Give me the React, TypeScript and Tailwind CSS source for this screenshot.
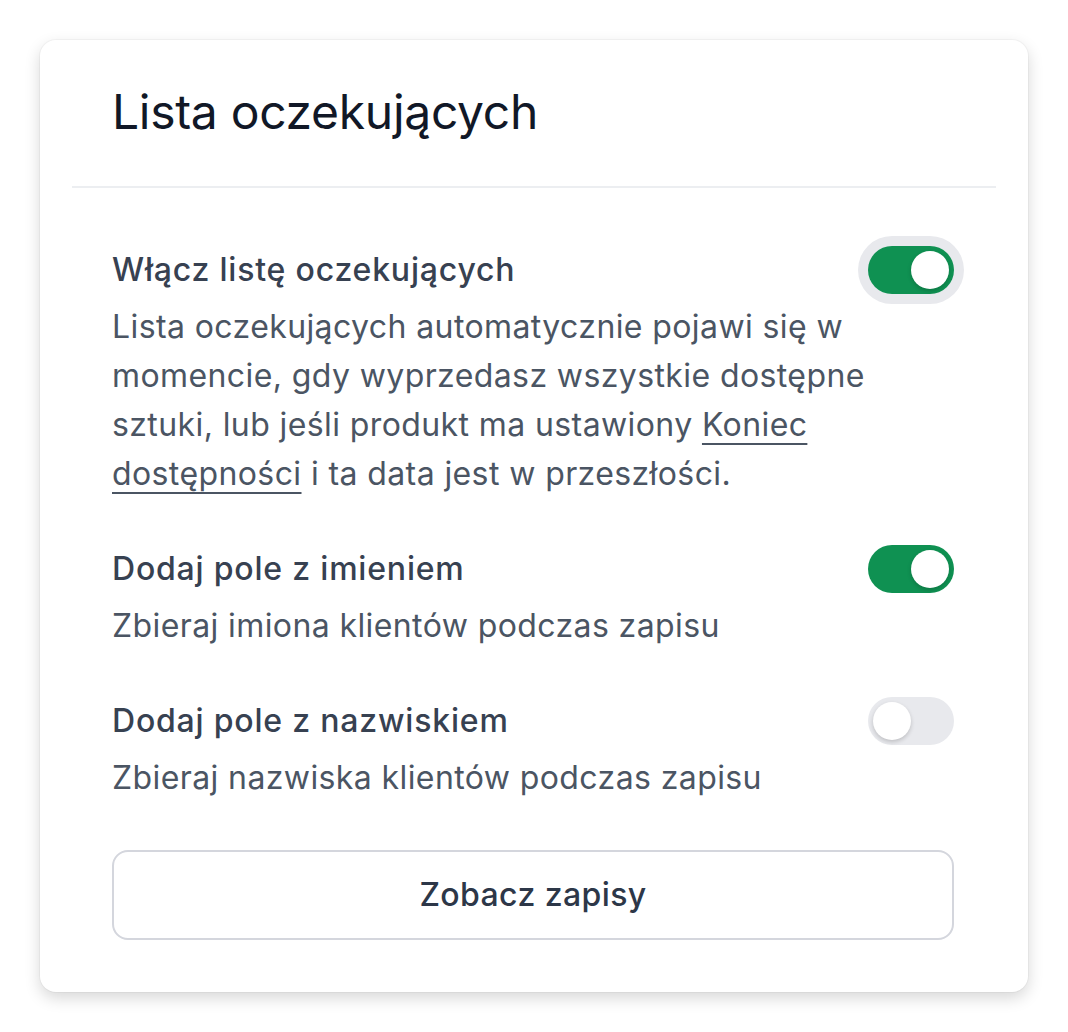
import { useState } from "react";

interface ToggleProps {
  checked: boolean;
  focused?: boolean;
  onChange: (value: boolean) => void;
}

const Toggle: React.FC<ToggleProps> = (props) => {
  return (
    <button
      type="button"
      role="switch"
      aria-checked={props.checked}
      onClick={() => props.onChange(!props.checked)}
      className={
        "relative flex h-[48px] w-[86px] shrink-0 items-center rounded-full p-[5px] " +
        (props.checked ? "bg-[#0f9152] justify-end " : "bg-[#e8e9ed] justify-start ") +
        (props.focused ? "ring-[10px] ring-[#e8e9ed]" : "")
      }
    >
      <span className="block h-[38px] w-[38px] rounded-full bg-white shadow-[0_2px_4px_rgba(0,0,0,0.18)]" />
    </button>
  );
};

interface SettingRowProps {
  title: string;
  checked: boolean;
  focused?: boolean;
  onChange: (value: boolean) => void;
  children: React.ReactNode;
}

const SettingRow: React.FC<SettingRowProps> = (props) => {
  return (
    <div className="flex flex-col">
      <div className="flex items-start justify-between">
        <h3 className="text-[32px] leading-[48px] font-medium tracking-[0.8px] text-[#374151]">
          {props.title}
        </h3>
        <Toggle
          checked={props.checked}
          focused={props.focused}
          onChange={props.onChange}
        />
      </div>
      <p className="mt-2 text-[32px] leading-[49px] tracking-[0.4px] text-[#4b5563]">
        {props.children}
      </p>
    </div>
  );
};

export default function App() {
  const [enabled, setEnabled] = useState(true);
  const [firstName, setFirstName] = useState(true);
  const [lastName, setLastName] = useState(false);

  return (
    <div
      className="min-h-screen bg-white p-[40px]"
      style={{ fontFamily: "Inter, 'Noto Sans', sans-serif" }}
    >
      <div className="w-[988px] rounded-[16px] bg-white shadow-[0_6px_16px_rgba(0,0,0,0.16),0_0_0_1px_rgba(0,0,0,0.03)]">
        <div className="pl-[72px] pr-[74px] pt-[40px] pb-[42px]">
          <h2 className="text-[48px] leading-[64px] font-normal tracking-[-0.3px] text-[#111827]">
            Lista oczekujących
          </h2>
        </div>
        <div className="mx-[32px] h-[2px] bg-[#eceef1]" />
        <div className="flex flex-col gap-[47px] pl-[72px] pr-[74px] pt-[58px]">
          <SettingRow
            title="Włącz listę oczekujących"
            checked={enabled}
            focused
            onChange={setEnabled}
          >
            Lista oczekujących automatycznie pojawi się w momencie, gdy
            wyprzedasz wszystkie dostępne sztuki, lub jeśli produkt ma
            ustawiony{" "}
            <a
              href="#"
              className="underline decoration-[2px] underline-offset-[7px] [text-decoration-skip-ink:none]"
            >
              Koniec dostępności
            </a>{" "}
            i ta data jest w przeszłości.
          </SettingRow>
          <SettingRow
            title="Dodaj pole z imieniem"
            checked={firstName}
            onChange={setFirstName}
          >
            Zbieraj imiona klientów podczas zapisu
          </SettingRow>
          <SettingRow
            title="Dodaj pole z nazwiskiem"
            checked={lastName}
            onChange={setLastName}
          >
            Zbieraj nazwiska klientów podczas zapisu
          </SettingRow>
        </div>
        <div className="pl-[72px] pr-[74px] pt-[48px] pb-[52px]">
          <button
            type="button"
            className="flex h-[90px] w-full items-center justify-center rounded-[16px] border-2 border-[#d4d6dd] bg-white text-[32px] font-medium tracking-[0.4px] text-[#2d3748]"
          >
            Zobacz zapisy
          </button>
        </div>
      </div>
    </div>
  );
}
